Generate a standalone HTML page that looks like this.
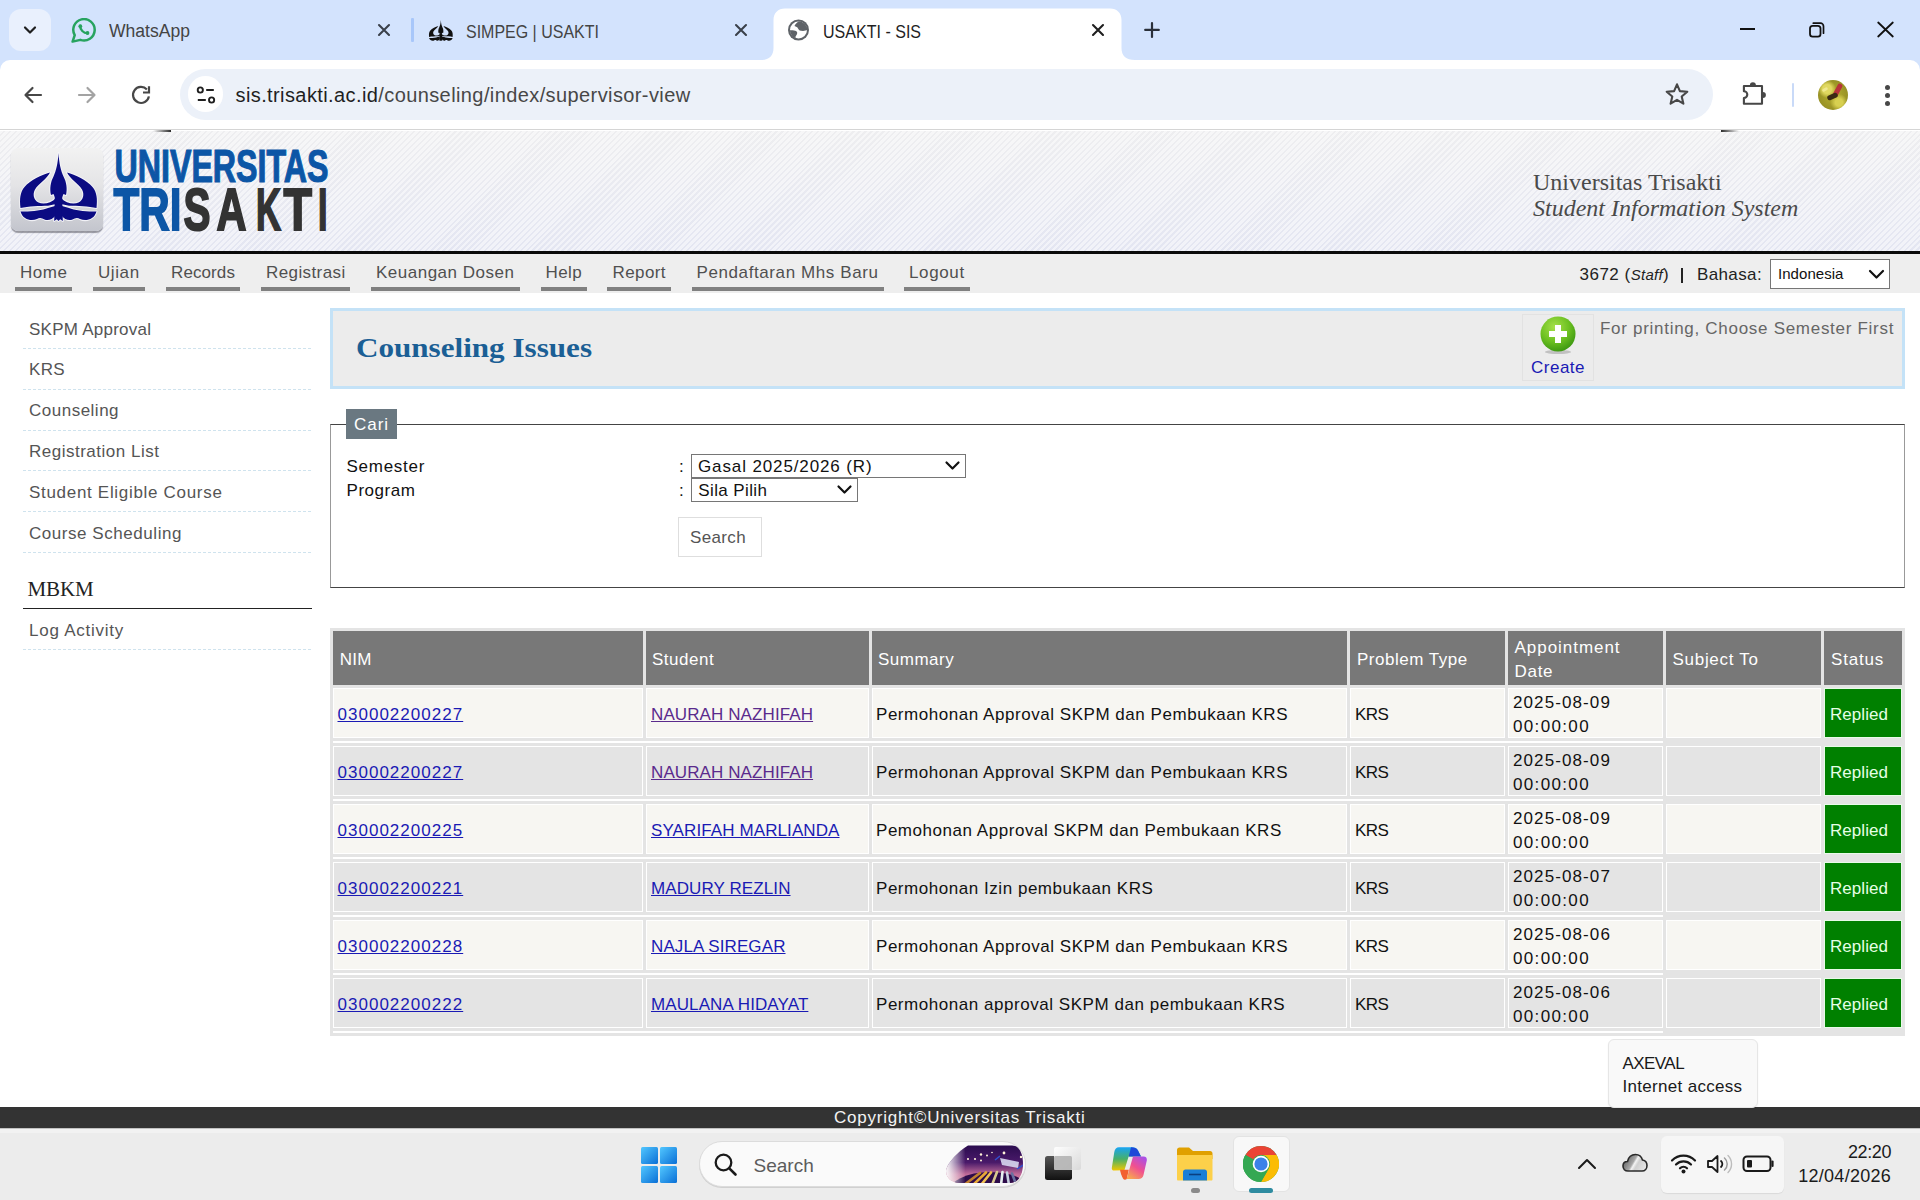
<!DOCTYPE html>
<html><head><meta charset="utf-8"><title>USAKTI - SIS</title>
<style>
html,body{margin:0;padding:0;width:1920px;height:1200px;overflow:hidden;background:#ffffff;font-family:"Liberation Sans",sans-serif;}
.r{position:absolute;}
.t{position:absolute;white-space:nowrap;}
</style></head><body>
<div class="r" style="left:0px;top:0px;width:1920px;height:72px;background:#d3e3fd"></div>
<div class="r" style="left:9px;top:9px;width:42px;height:42px;background:#e9f0fd;border-radius:12px"></div>
<svg class="r" style="left:21px;top:21px;" width="18" height="18" viewBox="0 0 18 18"><path d="M4 6.5 L9 11.5 L14 6.5" fill="none" stroke="#1f1f1f" stroke-width="2.2" stroke-linecap="round" stroke-linejoin="round"/></svg>
<svg class="r" style="left:71px;top:18px;" width="26" height="26" viewBox="0 0 26 26"><path d="M3.73 17.15 A10.7 10.7 0 1 1 9.34 21.85 L1.6 23.6 Z" fill="none" stroke="#27a35f" stroke-width="2.5" stroke-linejoin="round"/><path d="M9.2 8 C9 11.5 12.5 15.3 16.6 15.2" fill="none" stroke="#27a35f" stroke-width="2.3" stroke-linecap="round"/><circle cx="9.3" cy="8.2" r="1.9" fill="#27a35f"/><circle cx="16.5" cy="15" r="1.9" fill="#27a35f"/></svg>
<div class="t " style="left:108.5px;top:22.26px;font-size:18px;line-height:18px;color:#444;letter-spacing:0px;font-family:'Liberation Sans', sans-serif;font-weight:normal;font-style:normal;transform:scaleX(0.976);transform-origin:0 0;">WhatsApp</div>
<svg class="r" style="left:377px;top:23px;" width="14" height="14" viewBox="0 0 14 14"><path d="M2 2L12 12M12 2L2 12" stroke="#3a404a" stroke-width="2.1" stroke-linecap="round"/></svg>
<div class="r" style="left:411px;top:18px;width:2.5px;height:24px;background:#a8c7fa;border-radius:1px"></div>
<div class="t " style="left:465.5px;top:22.76px;font-size:18px;line-height:18px;color:#444;letter-spacing:0px;font-family:'Liberation Sans', sans-serif;font-weight:normal;font-style:normal;transform:scaleX(0.888);transform-origin:0 0;">SIMPEG | USAKTI</div>
<svg class="r" style="left:734px;top:23px;" width="14" height="14" viewBox="0 0 14 14"><path d="M2 2L12 12M12 2L2 12" stroke="#3a404a" stroke-width="2.1" stroke-linecap="round"/></svg>
<svg class="r" style="left:761px;top:8px;" width="374" height="53" viewBox="0 0 374 53"><path d="M0 52 C8 52 12.5 48 12.5 40 L12.5 12 C12.5 5 17 0.5 24 0.5 L349 0.5 C356 0.5 360.5 5 360.5 12 L360.5 40 C360.5 48 365 52 374 52 L374 53 L0 53Z" fill="#ffffff"/></svg>
<svg class="r" style="left:787px;top:19px;" width="23" height="23" viewBox="0 0 23 23"><defs><clipPath id="gc"><circle cx="11.5" cy="11" r="8.7"/></clipPath></defs><circle cx="11.5" cy="11" r="10.5" fill="#5f6368"/><circle cx="11.5" cy="11" r="8.5" fill="#fff"/><g clip-path="url(#gc)" fill="#5f6368"><path d="M13 1 C11 3 8 5 7.5 7 C9 8 10.5 8 11 9.5 C11.8 11.2 13 12 16 12 C18 12 20 11 22 10.5 L22 0 Z"/><path d="M0 11.5 C3 11 7.5 11 9 12 C10.7 13 10.5 15 9.2 16.5 C8 17.5 8.5 19.5 9.5 22 L0 22 Z"/></g></svg>
<div class="t " style="left:822.5px;top:22.76px;font-size:18px;line-height:18px;color:#1f1f1f;letter-spacing:0px;font-family:'Liberation Sans', sans-serif;font-weight:normal;font-style:normal;transform:scaleX(0.891);transform-origin:0 0;">USAKTI - SIS</div>
<svg class="r" style="left:1091px;top:23px;" width="14" height="14" viewBox="0 0 14 14"><path d="M2 2L12 12M12 2L2 12" stroke="#1f1f1f" stroke-width="2.1" stroke-linecap="round"/></svg>
<svg class="r" style="left:1143px;top:22px;" width="18" height="18" viewBox="0 0 18 18"><path d="M9 1.2V15M2.2 7.9H15.8" stroke="#2a303a" stroke-width="2.2" stroke-linecap="round"/></svg>
<div class="r" style="left:1740px;top:28px;width:15.3px;height:2.3px;background:#111"></div>
<svg class="r" style="left:1807px;top:20px;" width="20" height="20" viewBox="0 0 20 20"><rect x="3" y="5.8" width="10.5" height="10.8" rx="2.6" fill="none" stroke="#111" stroke-width="1.8"/><path d="M6.3 3.2 H13.5 A3 3 0 0 1 16.5 6.2 V13.2" fill="none" stroke="#111" stroke-width="1.7" stroke-linecap="round"/></svg>
<svg class="r" style="left:1875px;top:20px;" width="20" height="20" viewBox="0 0 20 20"><path d="M3.2 2.5 L17.8 16.5 M17.8 2.5 L3.2 16.5" stroke="#111" stroke-width="1.8" stroke-linecap="round"/></svg>
<div class="r" style="left:0px;top:60px;width:1920px;height:70px;background:#ffffff;border-radius:10px 10px 0 0"></div>
<div class="r" style="left:0px;top:129px;width:1920px;height:1px;background:#d5d5d5"></div>
<svg class="r" style="left:22px;top:84px;" width="22" height="22" viewBox="0 0 22 22"><path d="M19 11H4M10.5 4L3.5 11L10.5 18" fill="none" stroke="#474747" stroke-width="2.2" stroke-linecap="round" stroke-linejoin="round"/></svg>
<svg class="r" style="left:76px;top:84px;" width="22" height="22" viewBox="0 0 22 22"><path d="M3 11H18M11.5 4L18.5 11L11.5 18" fill="none" stroke="#a3a3a3" stroke-width="2.2" stroke-linecap="round" stroke-linejoin="round"/></svg>
<svg class="r" style="left:130px;top:84px;" width="22" height="22" viewBox="0 0 22 22"><path d="M18.9 12.4 A8 8 0 1 1 16.9 5.5" fill="none" stroke="#474747" stroke-width="2.2"/><path d="M13 8.5 H19 V2.2" fill="none" stroke="#474747" stroke-width="2.2" stroke-linejoin="miter"/></svg>
<div class="r" style="left:180px;top:69px;width:1533px;height:51px;background:#ecf1f9;border-radius:25.5px"></div>
<div class="r" style="left:188px;top:76px;width:35px;height:36px;background:#ffffff;border-radius:18px"></div>
<svg class="r" style="left:195px;top:84px;" width="22" height="22" viewBox="0 0 22 22"><circle cx="5.3" cy="6" r="2.6" fill="none" stroke="#1f1f1f" stroke-width="1.9"/><path d="M11.2 6H18.8" stroke="#1f1f1f" stroke-width="2"/><circle cx="16.6" cy="16" r="2.6" fill="none" stroke="#1f1f1f" stroke-width="1.9"/><path d="M2.8 16H10.8" stroke="#1f1f1f" stroke-width="2"/></svg>
<div class="t " style="left:235.5px;top:85.07px;font-size:20px;line-height:20px;color:#474747;letter-spacing:0.4px;font-family:'Liberation Sans', sans-serif;font-weight:normal;font-style:normal;"><span style="color:#1f1f1f">sis.trisakti.ac.id</span>/counseling/index/supervisor-view</div>
<svg class="r" style="left:1664px;top:82px;" width="26" height="25" viewBox="0 0 26 25"><path d="M13 2.3 L15.9 9.1 L23.3 9.7 L17.7 14.5 L19.4 21.7 L13 17.9 L6.6 21.7 L8.3 14.5 L2.7 9.7 L10.1 9.1Z" fill="none" stroke="#474747" stroke-width="2.1" stroke-linejoin="round"/></svg>
<svg class="r" style="left:1741px;top:81px;" width="27" height="26" viewBox="0 0 27 26"><path d="M2.9 5 H21 V22.8 H2.9 V17 A3.4 3.4 0 0 0 2.9 10.2 Z" fill="none" stroke="#474747" stroke-width="2.1" stroke-linejoin="round"/><path d="M8.9 4.3 A3 3 0 0 1 14.9 4.3 Z" fill="#474747"/><path d="M21.9 10.9 A3 3 0 0 1 21.9 16.9 Z" fill="#474747"/></svg>
<div class="r" style="left:1791.5px;top:82.5px;width:2.5px;height:24px;background:#c9daf8;border-radius:1px"></div>
<div class="r" style="left:1818px;top:80px;width:30px;height:30px;border-radius:15px;overflow:hidden;background:radial-gradient(circle at 30% 30%, #e0d860 0 15%, transparent 30%),radial-gradient(circle at 70% 75%, #d8d050 0 12%, transparent 28%),radial-gradient(circle at 50% 50%, #b8b030, #8a8420)"><div style="position:absolute;left:17px;top:3px;width:5px;height:15px;background:#b8323a;transform:rotate(28deg);border-radius:3px"></div><div style="position:absolute;left:9px;top:14px;width:11px;height:5px;background:#3a2a12;transform:rotate(-25deg);border-radius:3px"></div><div style="position:absolute;left:4px;top:8px;width:6px;height:3px;background:#f0e890;transform:rotate(-30deg);border-radius:2px"></div></div>
<div class="r" style="left:1884.5px;top:84.5px;width:5px;height:5px;background:#474747;border-radius:50%"></div>
<div class="r" style="left:1884.5px;top:92.5px;width:5px;height:5px;background:#474747;border-radius:50%"></div>
<div class="r" style="left:1884.5px;top:100.5px;width:5px;height:5px;background:#474747;border-radius:50%"></div>
<div class="r" style="left:0px;top:131px;width:1920px;height:120px;background:repeating-linear-gradient(135deg, rgba(255,255,255,0.5) 0 2.5px, rgba(255,255,255,0) 2.5px 4.2px), linear-gradient(#eeeef0, #e4e6f2)"></div>
<div class="r" style="left:0px;top:251px;width:1920px;height:3px;background:#0a0a0a"></div>
<div class="r" style="left:153px;top:130px;width:18px;height:1.5px;background:linear-gradient(90deg,rgba(40,40,40,0),#2a2a2a)"></div>
<div class="r" style="left:1721px;top:130px;width:18px;height:1.5px;background:linear-gradient(90deg,#2a2a2a,rgba(40,40,40,0))"></div>
<div class="r" style="left:0px;top:254px;width:1920px;height:39px;background:#eeeeee"></div>
<div class="r" style="left:11px;top:148px;width:92px;height:83px;border-radius:7px;background:linear-gradient(#f2f2f2 0%, #e4e4e6 45%, #c3c5cd 100%);box-shadow:0 2px 1px rgba(80,80,90,0.55)"></div>
<svg class="r" style="left:11px;top:148px;" width="92" height="83" viewBox="11 148 92 83"><g fill="#f6f6fa" stroke="#f6f6fa" stroke-width="2" stroke-linejoin="round" opacity="0.9"><path d="M58.5 153 C59 163 61 171 63.5 176.5 C66.5 182 67.5 189 66 195 L63.5 194 L62 197.5 L55 197.5 L53.5 194 L51 195 C49.5 189 50.5 182 53.5 176.5 C56 171 58 163 58.5 153Z"/><path d="M54.8 196 L62.2 196 L62.8 221 L60.2 219.3 L58.5 221 L56.8 219.3 L54.2 221Z"/><path d="M50 172.5 C42 175 30 180 24.5 187 C20 192.5 19.5 199 20.5 208 C28 206.3 40 206 48 205.8 L56 204 L56 198 C51 203.5 43 204.5 38.5 202.5 C33.5 200 32.5 194 35 189.5 C38.5 183.5 47 179 50 172.5Z"/><path d="M20.5 211.5 C30 212 42 210.5 48 208 L55 206 L55.5 215.5 C52.5 219.5 48 221 44.5 219.5 C42 218 39.5 217.5 37 219 C31.5 221.5 23 220 20.5 211.5Z"/><g transform="translate(117,0) scale(-1,1)"><path d="M50 172.5 C42 175 30 180 24.5 187 C20 192.5 19.5 199 20.5 208 C28 206.3 40 206 48 205.8 L56 204 L56 198 C51 203.5 43 204.5 38.5 202.5 C33.5 200 32.5 194 35 189.5 C38.5 183.5 47 179 50 172.5Z"/><path d="M20.5 211.5 C30 212 42 210.5 48 208 L55 206 L55.5 215.5 C52.5 219.5 48 221 44.5 219.5 C42 218 39.5 217.5 37 219 C31.5 221.5 23 220 20.5 211.5Z"/></g></g><g fill="#0b0b82"><path d="M58.5 153 C59 163 61 171 63.5 176.5 C66.5 182 67.5 189 66 195 L63.5 194 L62 197.5 L55 197.5 L53.5 194 L51 195 C49.5 189 50.5 182 53.5 176.5 C56 171 58 163 58.5 153Z"/><path d="M54.8 196 L62.2 196 L62.8 221 L60.2 219.3 L58.5 221 L56.8 219.3 L54.2 221Z"/><path d="M50 172.5 C42 175 30 180 24.5 187 C20 192.5 19.5 199 20.5 208 C28 206.3 40 206 48 205.8 L56 204 L56 198 C51 203.5 43 204.5 38.5 202.5 C33.5 200 32.5 194 35 189.5 C38.5 183.5 47 179 50 172.5Z"/><path d="M20.5 211.5 C30 212 42 210.5 48 208 L55 206 L55.5 215.5 C52.5 219.5 48 221 44.5 219.5 C42 218 39.5 217.5 37 219 C31.5 221.5 23 220 20.5 211.5Z"/><g transform="translate(117,0) scale(-1,1)"><path d="M50 172.5 C42 175 30 180 24.5 187 C20 192.5 19.5 199 20.5 208 C28 206.3 40 206 48 205.8 L56 204 L56 198 C51 203.5 43 204.5 38.5 202.5 C33.5 200 32.5 194 35 189.5 C38.5 183.5 47 179 50 172.5Z"/><path d="M20.5 211.5 C30 212 42 210.5 48 208 L55 206 L55.5 215.5 C52.5 219.5 48 221 44.5 219.5 C42 218 39.5 217.5 37 219 C31.5 221.5 23 220 20.5 211.5Z"/></g></g></svg>
<svg class="r" style="left:428px;top:19px;" width="26" height="23" viewBox="17 150 84 74"><g fill="#111"><path d="M58.5 153 C59 163 61 171 63.5 176.5 C66.5 182 67.5 189 66 195 L63.5 194 L62 197.5 L55 197.5 L53.5 194 L51 195 C49.5 189 50.5 182 53.5 176.5 C56 171 58 163 58.5 153Z"/><path d="M54.8 196 L62.2 196 L62.8 221 L60.2 219.3 L58.5 221 L56.8 219.3 L54.2 221Z"/><path d="M50 172.5 C42 175 30 180 24.5 187 C20 192.5 19.5 199 20.5 208 C28 206.3 40 206 48 205.8 L56 204 L56 198 C51 203.5 43 204.5 38.5 202.5 C33.5 200 32.5 194 35 189.5 C38.5 183.5 47 179 50 172.5Z"/><path d="M20.5 211.5 C30 212 42 210.5 48 208 L55 206 L55.5 215.5 C52.5 219.5 48 221 44.5 219.5 C42 218 39.5 217.5 37 219 C31.5 221.5 23 220 20.5 211.5Z"/><g transform="translate(117,0) scale(-1,1)"><path d="M50 172.5 C42 175 30 180 24.5 187 C20 192.5 19.5 199 20.5 208 C28 206.3 40 206 48 205.8 L56 204 L56 198 C51 203.5 43 204.5 38.5 202.5 C33.5 200 32.5 194 35 189.5 C38.5 183.5 47 179 50 172.5Z"/><path d="M20.5 211.5 C30 212 42 210.5 48 208 L55 206 L55.5 215.5 C52.5 219.5 48 221 44.5 219.5 C42 218 39.5 217.5 37 219 C31.5 221.5 23 220 20.5 211.5Z"/></g></g></svg>
<svg class="r" style="left:100px;top:140px;" width="240" height="100" viewBox="0 0 240 100"><text x="14.5" y="41.9" font-family="Liberation Sans" font-weight="bold" font-size="47" fill="#0c56a6" stroke="#0c56a6" stroke-width="1.2" textLength="214" lengthAdjust="spacingAndGlyphs">UNIVERSITAS</text><text x="13.5" y="90" font-family="Liberation Sans" font-weight="bold" font-size="60" fill="#0c56a6" stroke="#0c56a6" stroke-width="1.8" textLength="68" lengthAdjust="spacingAndGlyphs">TRI</text><text x="83.5" y="90" font-family="Liberation Sans" font-weight="bold" font-size="60" fill="#333333" stroke="#333333" stroke-width="2" textLength="27" lengthAdjust="spacingAndGlyphs">S</text><text x="116.5" y="90" font-family="Liberation Sans" font-weight="bold" font-size="60" fill="#333333" stroke="#333333" stroke-width="2" textLength="30" lengthAdjust="spacingAndGlyphs">A</text><text x="156" y="90" font-family="Liberation Sans" font-weight="bold" font-size="60" fill="#333333" stroke="#333333" stroke-width="2" textLength="25" lengthAdjust="spacingAndGlyphs">K</text><text x="183.5" y="90" font-family="Liberation Sans" font-weight="bold" font-size="60" fill="#333333" stroke="#333333" stroke-width="2" textLength="28.5" lengthAdjust="spacingAndGlyphs">T</text><text x="218" y="90" font-family="Liberation Sans" font-weight="bold" font-size="60" fill="#333333" stroke="#333333" stroke-width="2" textLength="9.5" lengthAdjust="spacingAndGlyphs">I</text></svg>
<div class="t " style="left:1533px;top:169.90px;font-size:24px;line-height:24px;color:#4a4a4a;letter-spacing:0px;font-family:'Liberation Serif', serif;font-weight:normal;font-style:normal;">Universitas Trisakti</div>
<div class="t " style="left:1533px;top:195.90px;font-size:24px;line-height:24px;color:#4a4a4a;letter-spacing:0px;font-family:'Liberation Serif', serif;font-weight:normal;font-style:italic;">Student Information System</div>
<div class="t " style="left:20px;top:263.61px;font-size:17px;line-height:17px;color:#505050;letter-spacing:0.54px;font-family:'Liberation Sans', sans-serif;font-weight:normal;font-style:normal;">Home</div>
<div class="r" style="left:15px;top:287px;width:57px;height:4px;background:#808080"></div>
<div class="t " style="left:98px;top:263.61px;font-size:17px;line-height:17px;color:#505050;letter-spacing:0.59px;font-family:'Liberation Sans', sans-serif;font-weight:normal;font-style:normal;">Ujian</div>
<div class="r" style="left:93px;top:287px;width:52px;height:4px;background:#808080"></div>
<div class="t " style="left:171px;top:263.61px;font-size:17px;line-height:17px;color:#505050;letter-spacing:0.1px;font-family:'Liberation Sans', sans-serif;font-weight:normal;font-style:normal;">Records</div>
<div class="r" style="left:166px;top:287px;width:74px;height:4px;background:#808080"></div>
<div class="t " style="left:266px;top:263.61px;font-size:17px;line-height:17px;color:#505050;letter-spacing:0.4px;font-family:'Liberation Sans', sans-serif;font-weight:normal;font-style:normal;">Registrasi</div>
<div class="r" style="left:261px;top:287px;width:89px;height:4px;background:#808080"></div>
<div class="t " style="left:376px;top:263.61px;font-size:17px;line-height:17px;color:#505050;letter-spacing:0.5px;font-family:'Liberation Sans', sans-serif;font-weight:normal;font-style:normal;">Keuangan Dosen</div>
<div class="r" style="left:371px;top:287px;width:149px;height:4px;background:#808080"></div>
<div class="t " style="left:545.5px;top:263.61px;font-size:17px;line-height:17px;color:#505050;letter-spacing:0.38px;font-family:'Liberation Sans', sans-serif;font-weight:normal;font-style:normal;">Help</div>
<div class="r" style="left:541px;top:287px;width:46px;height:4px;background:#808080"></div>
<div class="t " style="left:612.5px;top:263.61px;font-size:17px;line-height:17px;color:#505050;letter-spacing:0.4px;font-family:'Liberation Sans', sans-serif;font-weight:normal;font-style:normal;">Report</div>
<div class="r" style="left:607px;top:287px;width:64px;height:4px;background:#808080"></div>
<div class="t " style="left:696.5px;top:263.61px;font-size:17px;line-height:17px;color:#505050;letter-spacing:0.6px;font-family:'Liberation Sans', sans-serif;font-weight:normal;font-style:normal;">Pendaftaran Mhs Baru</div>
<div class="r" style="left:692px;top:287px;width:192px;height:4px;background:#808080"></div>
<div class="t " style="left:909px;top:263.61px;font-size:17px;line-height:17px;color:#505050;letter-spacing:0.63px;font-family:'Liberation Sans', sans-serif;font-weight:normal;font-style:normal;">Logout</div>
<div class="r" style="left:904px;top:287px;width:66px;height:4px;background:#808080"></div>
<div class="t " style="left:1579.5px;top:265.61px;font-size:17px;line-height:17px;color:#222;letter-spacing:0.5px;font-family:'Liberation Sans', sans-serif;font-weight:normal;font-style:normal;">3672 (<span style="font-style:italic;font-size:15px;letter-spacing:0.3px">Staff</span>)</div>
<div class="r" style="left:1680.5px;top:268px;width:2px;height:15px;background:#222"></div>
<div class="t " style="left:1697px;top:265.61px;font-size:17px;line-height:17px;color:#222;letter-spacing:0.37px;font-family:'Liberation Sans', sans-serif;font-weight:normal;font-style:normal;">Bahasa:</div>
<div class="r" style="left:1770px;top:259px;width:120px;height:30px;background:#fff;border:1px solid #767676;box-sizing:border-box"></div>
<div class="t " style="left:1778px;top:266.30px;font-size:15px;line-height:15px;color:#111;letter-spacing:0.05px;font-family:'Liberation Sans', sans-serif;font-weight:normal;font-style:normal;">Indonesia</div>
<svg class="r" style="left:1868px;top:269px;" width="17" height="11" viewBox="0 0 17 11"><path d="M2 2 L8.5 8.5 L15 2" fill="none" stroke="#111" stroke-width="2.2" stroke-linecap="round" stroke-linejoin="round"/></svg>
<div class="t " style="left:29px;top:320.61px;font-size:17px;line-height:17px;color:#555;letter-spacing:0.25px;font-family:'Liberation Sans', sans-serif;font-weight:normal;font-style:normal;">SKPM Approval</div>
<div class="r" style="left:23px;top:348px;width:289px;height:1px;background:repeating-linear-gradient(90deg,#cfe3ee 0 3px,transparent 3px 5px)"></div>
<div class="t " style="left:29px;top:361.41px;font-size:17px;line-height:17px;color:#555;letter-spacing:0.3px;font-family:'Liberation Sans', sans-serif;font-weight:normal;font-style:normal;">KRS</div>
<div class="r" style="left:23px;top:389px;width:289px;height:1px;background:repeating-linear-gradient(90deg,#cfe3ee 0 3px,transparent 3px 5px)"></div>
<div class="t " style="left:29px;top:402.21px;font-size:17px;line-height:17px;color:#555;letter-spacing:0.5px;font-family:'Liberation Sans', sans-serif;font-weight:normal;font-style:normal;">Counseling</div>
<div class="r" style="left:23px;top:430px;width:289px;height:1px;background:repeating-linear-gradient(90deg,#cfe3ee 0 3px,transparent 3px 5px)"></div>
<div class="t " style="left:29px;top:443.01px;font-size:17px;line-height:17px;color:#555;letter-spacing:0.5px;font-family:'Liberation Sans', sans-serif;font-weight:normal;font-style:normal;">Registration List</div>
<div class="r" style="left:23px;top:470px;width:289px;height:1px;background:repeating-linear-gradient(90deg,#cfe3ee 0 3px,transparent 3px 5px)"></div>
<div class="t " style="left:29px;top:483.81px;font-size:17px;line-height:17px;color:#555;letter-spacing:0.69px;font-family:'Liberation Sans', sans-serif;font-weight:normal;font-style:normal;">Student Eligible Course</div>
<div class="r" style="left:23px;top:511px;width:289px;height:1px;background:repeating-linear-gradient(90deg,#cfe3ee 0 3px,transparent 3px 5px)"></div>
<div class="t " style="left:29px;top:524.61px;font-size:17px;line-height:17px;color:#555;letter-spacing:0.55px;font-family:'Liberation Sans', sans-serif;font-weight:normal;font-style:normal;">Course Scheduling</div>
<div class="r" style="left:23px;top:552px;width:289px;height:1px;background:repeating-linear-gradient(90deg,#cfe3ee 0 3px,transparent 3px 5px)"></div>
<div class="t " style="left:27.5px;top:579.41px;font-size:21px;line-height:21px;color:#222;letter-spacing:-0.1px;font-family:'Liberation Serif', serif;font-weight:normal;font-style:normal;">MBKM</div>
<div class="r" style="left:23px;top:608px;width:289px;height:1px;background:#222"></div>
<div class="t " style="left:29px;top:621.61px;font-size:17px;line-height:17px;color:#555;letter-spacing:0.76px;font-family:'Liberation Sans', sans-serif;font-weight:normal;font-style:normal;">Log Activity</div>
<div class="r" style="left:23px;top:649px;width:289px;height:1px;background:repeating-linear-gradient(90deg,#cfe3ee 0 3px,transparent 3px 5px)"></div>
<div class="r" style="left:330px;top:308px;width:1575px;height:81px;background:#ececec;border:3px solid #c4e2f7;box-sizing:border-box"></div>
<div class="t " style="left:355.5px;top:333.55px;font-size:28px;line-height:28px;color:#1b5f95;letter-spacing:0px;font-family:'Liberation Serif', serif;font-weight:bold;font-style:normal;transform:scaleX(1.111);transform-origin:0 0;">Counseling Issues</div>
<div class="r" style="left:1522px;top:314px;width:72px;height:67px;border:1px solid #e2e2e2;box-sizing:border-box"></div>
<svg class="r" style="left:1538px;top:315px;" width="40" height="42" viewBox="0 0 40 42"><defs><radialGradient id="g1" cx="40%" cy="30%" r="70%"><stop offset="0" stop-color="#a6e04a"/><stop offset="0.6" stop-color="#6cc021"/><stop offset="1" stop-color="#3f9a12"/></radialGradient></defs><ellipse cx="20" cy="37" rx="13" ry="2" fill="rgba(0,0,0,0.18)"/><circle cx="20" cy="19" r="17.5" fill="url(#g1)"/><path d="M20 10V28M11 19H29" stroke="#fff" stroke-width="6"/></svg>
<div class="t " style="left:1531px;top:358.61px;font-size:17px;line-height:17px;color:#1a1ab4;letter-spacing:0.5px;font-family:'Liberation Sans', sans-serif;font-weight:normal;font-style:normal;">Create</div>
<div class="t " style="left:1600px;top:319.61px;font-size:17px;line-height:17px;color:#666;letter-spacing:0.71px;font-family:'Liberation Sans', sans-serif;font-weight:normal;font-style:normal;">For printing, Choose Semester First</div>
<div class="r" style="left:330px;top:424px;width:1575px;height:164px;border:1px solid #444;border-left-color:#999;border-right-color:#999;box-sizing:border-box"></div>
<div class="r" style="left:346px;top:409px;width:51px;height:30px;background:#6a7881"></div>
<div class="t " style="left:354px;top:415.61px;font-size:17px;line-height:17px;color:#fff;letter-spacing:0.96px;font-family:'Liberation Sans', sans-serif;font-weight:normal;font-style:normal;">Cari</div>
<div class="t " style="left:346.5px;top:458.11px;font-size:17px;line-height:17px;color:#111;letter-spacing:0.74px;font-family:'Liberation Sans', sans-serif;font-weight:normal;font-style:normal;">Semester</div>
<div class="t " style="left:346.5px;top:482.11px;font-size:17px;line-height:17px;color:#111;letter-spacing:0.54px;font-family:'Liberation Sans', sans-serif;font-weight:normal;font-style:normal;">Program</div>
<div class="t " style="left:679px;top:458.11px;font-size:17px;line-height:17px;color:#111;letter-spacing:0px;font-family:'Liberation Sans', sans-serif;font-weight:normal;font-style:normal;">:</div>
<div class="t " style="left:679px;top:482.11px;font-size:17px;line-height:17px;color:#111;letter-spacing:0px;font-family:'Liberation Sans', sans-serif;font-weight:normal;font-style:normal;">:</div>
<div class="r" style="left:691px;top:454px;width:275px;height:24px;background:#fff;border:1px solid #767676;box-sizing:border-box"></div>
<div class="t " style="left:698px;top:458.11px;font-size:17px;line-height:17px;color:#111;letter-spacing:0.88px;font-family:'Liberation Sans', sans-serif;font-weight:normal;font-style:normal;">Gasal 2025/2026 (R)</div>
<svg class="r" style="left:944px;top:460px;" width="17" height="12" viewBox="0 0 17 12"><path d="M2.5 2.5 L8.5 8.5 L14.5 2.5" fill="none" stroke="#111" stroke-width="2.2" stroke-linecap="round" stroke-linejoin="round"/></svg>
<div class="r" style="left:691px;top:478px;width:167px;height:24px;background:#fff;border:1px solid #767676;box-sizing:border-box"></div>
<div class="t " style="left:698.3px;top:482.11px;font-size:17px;line-height:17px;color:#111;letter-spacing:0.38px;font-family:'Liberation Sans', sans-serif;font-weight:normal;font-style:normal;">Sila Pilih</div>
<svg class="r" style="left:836px;top:484px;" width="17" height="12" viewBox="0 0 17 12"><path d="M2.5 2.5 L8.5 8.5 L14.5 2.5" fill="none" stroke="#111" stroke-width="2.2" stroke-linecap="round" stroke-linejoin="round"/></svg>
<div class="r" style="left:678px;top:517px;width:84px;height:40px;background:#fff;border:1px solid #dedede;box-sizing:border-box"></div>
<div class="t " style="left:690px;top:528.61px;font-size:17px;line-height:17px;color:#555;letter-spacing:0.36px;font-family:'Liberation Sans', sans-serif;font-weight:normal;font-style:normal;">Search</div>
<div class="r" style="left:330px;top:628px;width:1575px;height:408px;background:#e4e4e4"></div>
<div class="r" style="left:333px;top:631px;width:310px;height:54px;background:#787878"></div>
<div class="r" style="left:646px;top:631px;width:223px;height:54px;background:#787878"></div>
<div class="r" style="left:872px;top:631px;width:475px;height:54px;background:#787878"></div>
<div class="r" style="left:1350px;top:631px;width:155px;height:54px;background:#787878"></div>
<div class="r" style="left:1508px;top:631px;width:155px;height:54px;background:#787878"></div>
<div class="r" style="left:1666px;top:631px;width:155px;height:54px;background:#787878"></div>
<div class="r" style="left:1824px;top:631px;width:78px;height:54px;background:#787878"></div>
<div class="t " style="left:339.8px;top:650.61px;font-size:17px;line-height:17px;color:#fff;letter-spacing:0.28px;font-family:'Liberation Sans', sans-serif;font-weight:normal;font-style:normal;">NIM</div>
<div class="t " style="left:652px;top:650.61px;font-size:17px;line-height:17px;color:#fff;letter-spacing:0.5px;font-family:'Liberation Sans', sans-serif;font-weight:normal;font-style:normal;">Student</div>
<div class="t " style="left:878px;top:650.61px;font-size:17px;line-height:17px;color:#fff;letter-spacing:0.5px;font-family:'Liberation Sans', sans-serif;font-weight:normal;font-style:normal;">Summary</div>
<div class="t " style="left:1357px;top:650.61px;font-size:17px;line-height:17px;color:#fff;letter-spacing:0.51px;font-family:'Liberation Sans', sans-serif;font-weight:normal;font-style:normal;">Problem Type</div>
<div class="t " style="left:1514.5px;top:638.61px;font-size:17px;line-height:17px;color:#fff;letter-spacing:0.96px;font-family:'Liberation Sans', sans-serif;font-weight:normal;font-style:normal;">Appointment</div>
<div class="t " style="left:1514.5px;top:662.61px;font-size:17px;line-height:17px;color:#fff;letter-spacing:0.7px;font-family:'Liberation Sans', sans-serif;font-weight:normal;font-style:normal;">Date</div>
<div class="t " style="left:1672.5px;top:650.61px;font-size:17px;line-height:17px;color:#fff;letter-spacing:0.71px;font-family:'Liberation Sans', sans-serif;font-weight:normal;font-style:normal;">Subject To</div>
<div class="t " style="left:1831px;top:650.61px;font-size:17px;line-height:17px;color:#fff;letter-spacing:0.8px;font-family:'Liberation Sans', sans-serif;font-weight:normal;font-style:normal;">Status</div>
<div class="r" style="left:333px;top:688px;width:310px;height:50px;background:#f7f6f2;border:1px solid #fff;box-sizing:border-box"></div>
<div class="r" style="left:646px;top:688px;width:223px;height:50px;background:#f7f6f2;border:1px solid #fff;box-sizing:border-box"></div>
<div class="r" style="left:872px;top:688px;width:475px;height:50px;background:#f7f6f2;border:1px solid #fff;box-sizing:border-box"></div>
<div class="r" style="left:1350px;top:688px;width:155px;height:50px;background:#f7f6f2;border:1px solid #fff;box-sizing:border-box"></div>
<div class="r" style="left:1508px;top:688px;width:155px;height:50px;background:#f7f6f2;border:1px solid #fff;box-sizing:border-box"></div>
<div class="r" style="left:1666px;top:688px;width:155px;height:50px;background:#f7f6f2;border:1px solid #fff;box-sizing:border-box"></div>
<div class="r" style="left:1824px;top:688px;width:78px;height:50px;background:#008000;border:1px solid #e8fbe8;box-sizing:border-box"></div>
<div class="r" style="left:333px;top:741px;width:1330px;height:2px;background:#fff"></div>
<div class="t " style="left:337.5px;top:705.61px;font-size:17px;line-height:17px;color:#1a1ab4;letter-spacing:1.02px;font-family:'Liberation Sans', sans-serif;font-weight:normal;font-style:normal;"><span style="text-decoration:underline">030002200227</span></div>
<div class="t " style="left:651px;top:705.61px;font-size:17px;line-height:17px;color:#5a2a8c;letter-spacing:0.1px;font-family:'Liberation Sans', sans-serif;font-weight:normal;font-style:normal;"><span style="text-decoration:underline">NAURAH NAZHIFAH</span></div>
<div class="t " style="left:876px;top:705.61px;font-size:17px;line-height:17px;color:#111;letter-spacing:0.54px;font-family:'Liberation Sans', sans-serif;font-weight:normal;font-style:normal;">Permohonan Approval SKPM dan Pembukaan KRS</div>
<div class="t " style="left:1355px;top:705.61px;font-size:17px;line-height:17px;color:#111;letter-spacing:-0.6px;font-family:'Liberation Sans', sans-serif;font-weight:normal;font-style:normal;">KRS</div>
<div class="t " style="left:1513px;top:693.61px;font-size:17px;line-height:17px;color:#111;letter-spacing:1.1px;font-family:'Liberation Sans', sans-serif;font-weight:normal;font-style:normal;">2025-08-09</div>
<div class="t " style="left:1513px;top:717.61px;font-size:17px;line-height:17px;color:#111;letter-spacing:1.35px;font-family:'Liberation Sans', sans-serif;font-weight:normal;font-style:normal;">00:00:00</div>
<div class="t " style="left:1830px;top:705.61px;font-size:17px;line-height:17px;color:#e6ffe6;letter-spacing:0.05px;font-family:'Liberation Sans', sans-serif;font-weight:normal;font-style:normal;">Replied</div>
<div class="r" style="left:333px;top:746px;width:310px;height:50px;background:#e4e4e4;border:1px solid #fff;box-sizing:border-box"></div>
<div class="r" style="left:646px;top:746px;width:223px;height:50px;background:#e4e4e4;border:1px solid #fff;box-sizing:border-box"></div>
<div class="r" style="left:872px;top:746px;width:475px;height:50px;background:#e4e4e4;border:1px solid #fff;box-sizing:border-box"></div>
<div class="r" style="left:1350px;top:746px;width:155px;height:50px;background:#e4e4e4;border:1px solid #fff;box-sizing:border-box"></div>
<div class="r" style="left:1508px;top:746px;width:155px;height:50px;background:#e4e4e4;border:1px solid #fff;box-sizing:border-box"></div>
<div class="r" style="left:1666px;top:746px;width:155px;height:50px;background:#e4e4e4;border:1px solid #fff;box-sizing:border-box"></div>
<div class="r" style="left:1824px;top:746px;width:78px;height:50px;background:#008000;border:1px solid #e8fbe8;box-sizing:border-box"></div>
<div class="r" style="left:333px;top:799px;width:1330px;height:2px;background:#fff"></div>
<div class="t " style="left:337.5px;top:763.61px;font-size:17px;line-height:17px;color:#1a1ab4;letter-spacing:1.02px;font-family:'Liberation Sans', sans-serif;font-weight:normal;font-style:normal;"><span style="text-decoration:underline">030002200227</span></div>
<div class="t " style="left:651px;top:763.61px;font-size:17px;line-height:17px;color:#5a2a8c;letter-spacing:0.1px;font-family:'Liberation Sans', sans-serif;font-weight:normal;font-style:normal;"><span style="text-decoration:underline">NAURAH NAZHIFAH</span></div>
<div class="t " style="left:876px;top:763.61px;font-size:17px;line-height:17px;color:#111;letter-spacing:0.54px;font-family:'Liberation Sans', sans-serif;font-weight:normal;font-style:normal;">Permohonan Approval SKPM dan Pembukaan KRS</div>
<div class="t " style="left:1355px;top:763.61px;font-size:17px;line-height:17px;color:#111;letter-spacing:-0.6px;font-family:'Liberation Sans', sans-serif;font-weight:normal;font-style:normal;">KRS</div>
<div class="t " style="left:1513px;top:751.61px;font-size:17px;line-height:17px;color:#111;letter-spacing:1.1px;font-family:'Liberation Sans', sans-serif;font-weight:normal;font-style:normal;">2025-08-09</div>
<div class="t " style="left:1513px;top:775.61px;font-size:17px;line-height:17px;color:#111;letter-spacing:1.35px;font-family:'Liberation Sans', sans-serif;font-weight:normal;font-style:normal;">00:00:00</div>
<div class="t " style="left:1830px;top:763.61px;font-size:17px;line-height:17px;color:#e6ffe6;letter-spacing:0.05px;font-family:'Liberation Sans', sans-serif;font-weight:normal;font-style:normal;">Replied</div>
<div class="r" style="left:333px;top:804px;width:310px;height:50px;background:#f7f6f2;border:1px solid #fff;box-sizing:border-box"></div>
<div class="r" style="left:646px;top:804px;width:223px;height:50px;background:#f7f6f2;border:1px solid #fff;box-sizing:border-box"></div>
<div class="r" style="left:872px;top:804px;width:475px;height:50px;background:#f7f6f2;border:1px solid #fff;box-sizing:border-box"></div>
<div class="r" style="left:1350px;top:804px;width:155px;height:50px;background:#f7f6f2;border:1px solid #fff;box-sizing:border-box"></div>
<div class="r" style="left:1508px;top:804px;width:155px;height:50px;background:#f7f6f2;border:1px solid #fff;box-sizing:border-box"></div>
<div class="r" style="left:1666px;top:804px;width:155px;height:50px;background:#f7f6f2;border:1px solid #fff;box-sizing:border-box"></div>
<div class="r" style="left:1824px;top:804px;width:78px;height:50px;background:#008000;border:1px solid #e8fbe8;box-sizing:border-box"></div>
<div class="r" style="left:333px;top:857px;width:1330px;height:2px;background:#fff"></div>
<div class="t " style="left:337.5px;top:821.61px;font-size:17px;line-height:17px;color:#1a1ab4;letter-spacing:1.02px;font-family:'Liberation Sans', sans-serif;font-weight:normal;font-style:normal;"><span style="text-decoration:underline">030002200225</span></div>
<div class="t " style="left:651px;top:821.61px;font-size:17px;line-height:17px;color:#1a1ab4;letter-spacing:0.1px;font-family:'Liberation Sans', sans-serif;font-weight:normal;font-style:normal;"><span style="text-decoration:underline">SYARIFAH MARLIANDA</span></div>
<div class="t " style="left:876px;top:821.61px;font-size:17px;line-height:17px;color:#111;letter-spacing:0.54px;font-family:'Liberation Sans', sans-serif;font-weight:normal;font-style:normal;">Pemohonan Approval SKPM dan Pembukaan KRS</div>
<div class="t " style="left:1355px;top:821.61px;font-size:17px;line-height:17px;color:#111;letter-spacing:-0.6px;font-family:'Liberation Sans', sans-serif;font-weight:normal;font-style:normal;">KRS</div>
<div class="t " style="left:1513px;top:809.61px;font-size:17px;line-height:17px;color:#111;letter-spacing:1.1px;font-family:'Liberation Sans', sans-serif;font-weight:normal;font-style:normal;">2025-08-09</div>
<div class="t " style="left:1513px;top:833.61px;font-size:17px;line-height:17px;color:#111;letter-spacing:1.35px;font-family:'Liberation Sans', sans-serif;font-weight:normal;font-style:normal;">00:00:00</div>
<div class="t " style="left:1830px;top:821.61px;font-size:17px;line-height:17px;color:#e6ffe6;letter-spacing:0.05px;font-family:'Liberation Sans', sans-serif;font-weight:normal;font-style:normal;">Replied</div>
<div class="r" style="left:333px;top:862px;width:310px;height:50px;background:#e4e4e4;border:1px solid #fff;box-sizing:border-box"></div>
<div class="r" style="left:646px;top:862px;width:223px;height:50px;background:#e4e4e4;border:1px solid #fff;box-sizing:border-box"></div>
<div class="r" style="left:872px;top:862px;width:475px;height:50px;background:#e4e4e4;border:1px solid #fff;box-sizing:border-box"></div>
<div class="r" style="left:1350px;top:862px;width:155px;height:50px;background:#e4e4e4;border:1px solid #fff;box-sizing:border-box"></div>
<div class="r" style="left:1508px;top:862px;width:155px;height:50px;background:#e4e4e4;border:1px solid #fff;box-sizing:border-box"></div>
<div class="r" style="left:1666px;top:862px;width:155px;height:50px;background:#e4e4e4;border:1px solid #fff;box-sizing:border-box"></div>
<div class="r" style="left:1824px;top:862px;width:78px;height:50px;background:#008000;border:1px solid #e8fbe8;box-sizing:border-box"></div>
<div class="r" style="left:333px;top:915px;width:1330px;height:2px;background:#fff"></div>
<div class="t " style="left:337.5px;top:879.61px;font-size:17px;line-height:17px;color:#1a1ab4;letter-spacing:1.02px;font-family:'Liberation Sans', sans-serif;font-weight:normal;font-style:normal;"><span style="text-decoration:underline">030002200221</span></div>
<div class="t " style="left:651px;top:879.61px;font-size:17px;line-height:17px;color:#1a1ab4;letter-spacing:0.1px;font-family:'Liberation Sans', sans-serif;font-weight:normal;font-style:normal;"><span style="text-decoration:underline">MADURY REZLIN</span></div>
<div class="t " style="left:876px;top:879.61px;font-size:17px;line-height:17px;color:#111;letter-spacing:0.54px;font-family:'Liberation Sans', sans-serif;font-weight:normal;font-style:normal;">Permohonan Izin pembukaan KRS</div>
<div class="t " style="left:1355px;top:879.61px;font-size:17px;line-height:17px;color:#111;letter-spacing:-0.6px;font-family:'Liberation Sans', sans-serif;font-weight:normal;font-style:normal;">KRS</div>
<div class="t " style="left:1513px;top:867.61px;font-size:17px;line-height:17px;color:#111;letter-spacing:1.1px;font-family:'Liberation Sans', sans-serif;font-weight:normal;font-style:normal;">2025-08-07</div>
<div class="t " style="left:1513px;top:891.61px;font-size:17px;line-height:17px;color:#111;letter-spacing:1.35px;font-family:'Liberation Sans', sans-serif;font-weight:normal;font-style:normal;">00:00:00</div>
<div class="t " style="left:1830px;top:879.61px;font-size:17px;line-height:17px;color:#e6ffe6;letter-spacing:0.05px;font-family:'Liberation Sans', sans-serif;font-weight:normal;font-style:normal;">Replied</div>
<div class="r" style="left:333px;top:920px;width:310px;height:50px;background:#f7f6f2;border:1px solid #fff;box-sizing:border-box"></div>
<div class="r" style="left:646px;top:920px;width:223px;height:50px;background:#f7f6f2;border:1px solid #fff;box-sizing:border-box"></div>
<div class="r" style="left:872px;top:920px;width:475px;height:50px;background:#f7f6f2;border:1px solid #fff;box-sizing:border-box"></div>
<div class="r" style="left:1350px;top:920px;width:155px;height:50px;background:#f7f6f2;border:1px solid #fff;box-sizing:border-box"></div>
<div class="r" style="left:1508px;top:920px;width:155px;height:50px;background:#f7f6f2;border:1px solid #fff;box-sizing:border-box"></div>
<div class="r" style="left:1666px;top:920px;width:155px;height:50px;background:#f7f6f2;border:1px solid #fff;box-sizing:border-box"></div>
<div class="r" style="left:1824px;top:920px;width:78px;height:50px;background:#008000;border:1px solid #e8fbe8;box-sizing:border-box"></div>
<div class="r" style="left:333px;top:973px;width:1330px;height:2px;background:#fff"></div>
<div class="t " style="left:337.5px;top:937.61px;font-size:17px;line-height:17px;color:#1a1ab4;letter-spacing:1.02px;font-family:'Liberation Sans', sans-serif;font-weight:normal;font-style:normal;"><span style="text-decoration:underline">030002200228</span></div>
<div class="t " style="left:651px;top:937.61px;font-size:17px;line-height:17px;color:#1a1ab4;letter-spacing:0.1px;font-family:'Liberation Sans', sans-serif;font-weight:normal;font-style:normal;"><span style="text-decoration:underline">NAJLA SIREGAR</span></div>
<div class="t " style="left:876px;top:937.61px;font-size:17px;line-height:17px;color:#111;letter-spacing:0.54px;font-family:'Liberation Sans', sans-serif;font-weight:normal;font-style:normal;">Permohonan Approval SKPM dan Pembukaan KRS</div>
<div class="t " style="left:1355px;top:937.61px;font-size:17px;line-height:17px;color:#111;letter-spacing:-0.6px;font-family:'Liberation Sans', sans-serif;font-weight:normal;font-style:normal;">KRS</div>
<div class="t " style="left:1513px;top:925.61px;font-size:17px;line-height:17px;color:#111;letter-spacing:1.1px;font-family:'Liberation Sans', sans-serif;font-weight:normal;font-style:normal;">2025-08-06</div>
<div class="t " style="left:1513px;top:949.61px;font-size:17px;line-height:17px;color:#111;letter-spacing:1.35px;font-family:'Liberation Sans', sans-serif;font-weight:normal;font-style:normal;">00:00:00</div>
<div class="t " style="left:1830px;top:937.61px;font-size:17px;line-height:17px;color:#e6ffe6;letter-spacing:0.05px;font-family:'Liberation Sans', sans-serif;font-weight:normal;font-style:normal;">Replied</div>
<div class="r" style="left:333px;top:978px;width:310px;height:50px;background:#e4e4e4;border:1px solid #fff;box-sizing:border-box"></div>
<div class="r" style="left:646px;top:978px;width:223px;height:50px;background:#e4e4e4;border:1px solid #fff;box-sizing:border-box"></div>
<div class="r" style="left:872px;top:978px;width:475px;height:50px;background:#e4e4e4;border:1px solid #fff;box-sizing:border-box"></div>
<div class="r" style="left:1350px;top:978px;width:155px;height:50px;background:#e4e4e4;border:1px solid #fff;box-sizing:border-box"></div>
<div class="r" style="left:1508px;top:978px;width:155px;height:50px;background:#e4e4e4;border:1px solid #fff;box-sizing:border-box"></div>
<div class="r" style="left:1666px;top:978px;width:155px;height:50px;background:#e4e4e4;border:1px solid #fff;box-sizing:border-box"></div>
<div class="r" style="left:1824px;top:978px;width:78px;height:50px;background:#008000;border:1px solid #e8fbe8;box-sizing:border-box"></div>
<div class="r" style="left:333px;top:1031px;width:1330px;height:2px;background:#fff"></div>
<div class="t " style="left:337.5px;top:995.61px;font-size:17px;line-height:17px;color:#1a1ab4;letter-spacing:1.02px;font-family:'Liberation Sans', sans-serif;font-weight:normal;font-style:normal;"><span style="text-decoration:underline">030002200222</span></div>
<div class="t " style="left:651px;top:995.61px;font-size:17px;line-height:17px;color:#1a1ab4;letter-spacing:0.1px;font-family:'Liberation Sans', sans-serif;font-weight:normal;font-style:normal;"><span style="text-decoration:underline">MAULANA HIDAYAT</span></div>
<div class="t " style="left:876px;top:995.61px;font-size:17px;line-height:17px;color:#111;letter-spacing:0.54px;font-family:'Liberation Sans', sans-serif;font-weight:normal;font-style:normal;">Permohonan approval SKPM dan pembukaan KRS</div>
<div class="t " style="left:1355px;top:995.61px;font-size:17px;line-height:17px;color:#111;letter-spacing:-0.6px;font-family:'Liberation Sans', sans-serif;font-weight:normal;font-style:normal;">KRS</div>
<div class="t " style="left:1513px;top:983.61px;font-size:17px;line-height:17px;color:#111;letter-spacing:1.1px;font-family:'Liberation Sans', sans-serif;font-weight:normal;font-style:normal;">2025-08-06</div>
<div class="t " style="left:1513px;top:1007.61px;font-size:17px;line-height:17px;color:#111;letter-spacing:1.35px;font-family:'Liberation Sans', sans-serif;font-weight:normal;font-style:normal;">00:00:00</div>
<div class="t " style="left:1830px;top:995.61px;font-size:17px;line-height:17px;color:#e6ffe6;letter-spacing:0.05px;font-family:'Liberation Sans', sans-serif;font-weight:normal;font-style:normal;">Replied</div>
<div class="r" style="left:0px;top:1107px;width:1920px;height:21px;background:#333333;overflow:hidden"></div>
<div class="r" style="left:0;top:1107px;width:1920px;height:21px;overflow:hidden">
<div class="t " style="left:834px;top:1.91px;font-size:17px;line-height:17px;color:#f4f4f4;letter-spacing:0.79px;font-family:'Liberation Sans', sans-serif;font-weight:normal;font-style:normal;">Copyright©Universitas Trisakti</div>
</div>
<div class="r" style="left:1608px;top:1039px;width:150px;height:69px;background:#f9f9f9;border:1px solid #e6e6e6;border-radius:6px;box-sizing:border-box;box-shadow:0 1px 2px rgba(0,0,0,0.06)"></div>
<div class="t " style="left:1622.5px;top:1054.61px;font-size:17px;line-height:17px;color:#1a1a1a;letter-spacing:-0.56px;font-family:'Liberation Sans', sans-serif;font-weight:normal;font-style:normal;">AXEVAL</div>
<div class="t " style="left:1622.5px;top:1077.61px;font-size:17px;line-height:17px;color:#1a1a1a;letter-spacing:0.31px;font-family:'Liberation Sans', sans-serif;font-weight:normal;font-style:normal;">Internet access</div>
<div class="r" style="left:0px;top:1128px;width:1920px;height:72px;background:linear-gradient(#c2c2c2 0 1px,#f2f2f2 1px 5px,#ececec 5px)"></div>
<svg class="r" style="left:641px;top:1147px;" width="36" height="36" viewBox="0 0 36 36"><defs><linearGradient id="wl" x1="0" y1="0" x2="1" y2="1"><stop offset="0" stop-color="#52c7ff"/><stop offset="1" stop-color="#0a6fd6"/></linearGradient></defs><g fill="url(#wl)"><rect x="0" y="0" width="17" height="17" rx="1.5"/><rect x="19" y="0" width="17" height="17" rx="1.5"/><rect x="0" y="19" width="17" height="17" rx="1.5"/><rect x="19" y="19" width="17" height="17" rx="1.5"/></g></svg>
<div class="r" style="left:698.5px;top:1141px;width:327px;height:46px;background:#fafafa;border:1px solid #dcdcdc;border-radius:23px;box-sizing:border-box;box-shadow:0 1px 0 #d0d0d0"></div>
<svg class="r" style="left:713px;top:1152px;" width="26" height="26" viewBox="0 0 26 26"><circle cx="10.5" cy="10.5" r="7.8" fill="none" stroke="#1a1a1a" stroke-width="2.3"/><path d="M16.3 16.3 L22.5 22.5" stroke="#1a1a1a" stroke-width="2.6" stroke-linecap="round"/></svg>
<div class="t " style="left:753.5px;top:1155.92px;font-size:19px;line-height:19px;color:#5c5c5c;letter-spacing:0px;font-family:'Liberation Sans', sans-serif;font-weight:normal;font-style:normal;">Search</div>
<svg class="r" style="left:946px;top:1145px;" width="78" height="39" viewBox="0 0 78 39"><defs><clipPath id="sc"><path d="M22 0.5 L66 0.5 C73 0.5 77 8 77 19 C77 30 72 38 64 38 L14 38 C6 38 0 33 0 26 C0 20 12 6 22 0.5 Z"/></clipPath><linearGradient id="sky" x1="0" y1="0" x2="0" y2="1"><stop offset="0" stop-color="#2a0c4e"/><stop offset="0.45" stop-color="#4a1a6a"/><stop offset="0.75" stop-color="#c06a98"/><stop offset="1" stop-color="#d88aa0"/></linearGradient><linearGradient id="fade" x1="0" y1="0" x2="1" y2="0"><stop offset="0" stop-color="#fafafa" stop-opacity="1"/><stop offset="0.25" stop-color="#fafafa" stop-opacity="0"/></linearGradient></defs><g clip-path="url(#sc)"><rect width="78" height="39" fill="url(#sky)"/><ellipse cx="44" cy="48" rx="42" ry="21" fill="#2e0c4a"/><g stroke-width="2.6" stroke-linecap="round"><path d="M18 40 L34 28" stroke="#c08030"/><path d="M27 40 L40 27.5" stroke="#e8a838"/><path d="M35 40 L45 27.5" stroke="#f0c050"/><path d="M46 40 L51 27" stroke="#d8c890"/><path d="M55 40 L56.5 27" stroke="#e8f0f0"/><path d="M63 40 L61 27.5" stroke="#c8d0e0"/><path d="M70 39 L66 28.5" stroke="#6870a0"/></g><g fill="#fff4d8"><circle cx="22" cy="14" r="1.1"/><circle cx="29" cy="14" r="1.1"/><circle cx="35" cy="9.5" r="1.2"/><circle cx="35" cy="15.5" r="1"/><circle cx="41" cy="10.5" r="1"/><circle cx="46" cy="7.5" r="0.8"/><circle cx="58" cy="8" r="1.4"/><circle cx="75" cy="12" r="1.2"/></g><path d="M54 13 L73 17 L72 23 L56 20Z" fill="#d8d8f0" opacity="0.9"/><path d="M49 15 L54 11 M71 24 L77 20" stroke="#3050d0" stroke-width="1.5"/><rect width="78" height="39" fill="url(#fade)"/></g></svg>
<svg class="r" style="left:1044px;top:1146px;" width="38" height="36" viewBox="0 0 38 36"><defs><linearGradient id="tv1" x1="0" y1="0" x2="0" y2="1"><stop offset="0" stop-color="#555"/><stop offset="1" stop-color="#111"/></linearGradient><linearGradient id="tv2" x1="0" y1="0" x2="1" y2="1"><stop offset="0" stop-color="#ffffff"/><stop offset="1" stop-color="#d8d8d8"/></linearGradient></defs><rect x="1" y="10" width="27" height="24" rx="2.5" fill="url(#tv1)"/><rect x="10" y="1" width="27" height="23" rx="2" fill="url(#tv2)" opacity="0.92"/><rect x="10" y="10" width="18" height="14" rx="1.5" fill="#b5b5b5" opacity="0.9"/></svg>
<svg class="r" style="left:1110px;top:1146px;" width="38" height="36" viewBox="0 0 38 36"><defs><linearGradient id="cp1" x1="0" y1="0" x2="0" y2="1"><stop offset="0" stop-color="#18a4f4"/><stop offset="0.5" stop-color="#48b068"/><stop offset="1" stop-color="#f2c800"/></linearGradient><linearGradient id="cp2" x1="0.8" y1="0" x2="0.2" y2="1"><stop offset="0" stop-color="#a850e8"/><stop offset="0.5" stop-color="#f05090"/><stop offset="1" stop-color="#f8a850"/></linearGradient></defs><path d="M9 1.3 L22 1.3 C25 1.3 27 2.5 28 4.5 L31 10.4 L18.6 10.4 L14.4 24.2 L4 24.6 C2.5 24.6 1.6 23.5 1.8 22 L4.3 6 C4.8 3 6.5 1.3 9 1.3 Z" fill="url(#cp1)"/><path d="M21 1.3 C24.5 1.3 26.8 2.5 28 4.5 L31 10.4 L18.8 10.4 Z" fill="#1c48d8"/><path d="M10 23.8 L18.8 23.8 L16.8 33 C15.5 34 14 34 13 32.5 C11.5 30 10.5 26.5 10 23.8Z" fill="#f26030"/><path d="M23 10.4 L33.5 10.4 C36 10.4 37.2 12 36.8 14.5 L33.5 29 C33 31.5 31 33 28.5 33 L16.6 33 Z" fill="url(#cp2)"/></svg>
<svg class="r" style="left:1176px;top:1147px;" width="38" height="34" viewBox="0 0 38 34"><path d="M1 3 C1 1.5 2 0.5 3.5 0.5 L13 0.5 L17 4 L34 4 C35.5 4 36.5 5 36.5 6.5 L36.5 12 L1 12Z" fill="#e0a000"/><path d="M1 8 L36.5 8 L36.5 32.5 C36.5 33 36 33.5 35.5 33.5 L2 33.5 C1.5 33.5 1 33 1 32.5Z" fill="#fcd04a"/><path d="M7 33.5 L7 25 C7 23.5 8 22.5 9.5 22.5 L28.5 22.5 C30 22.5 31 23.5 31 25 L31 33.5Z" fill="#1a7fd6"/><path d="M13 27.5 H25" stroke="#0a3f80" stroke-width="1.6"/></svg>
<div class="r" style="left:1191px;top:1188px;width:9px;height:5px;background:#8a8a8a;border-radius:3px"></div>
<div class="r" style="left:1232.5px;top:1136px;width:57px;height:56px;background:#f8f8f8;border:1px solid #e3e3e3;border-radius:6px;box-sizing:border-box"></div>
<svg class="r" style="left:1243px;top:1146px;" width="36" height="36" viewBox="0 0 36 36"><circle cx="18" cy="18" r="18" fill="#34a853"/><path d="M18 0 A18 18 0 0 1 33.6 9 L18 9 A9 9 0 0 0 10.2 13.5 L2.4 9 A18 18 0 0 1 18 0Z" fill="#ea4335"/><path d="M2.4 9 L10.2 13.5 A9 9 0 0 0 10.2 22.5 L2.4 27 A18 18 0 0 1 2.4 9Z" fill="#34a853"/><path d="M33.6 9 A18 18 0 0 1 18 36 L25.8 22.5 A9 9 0 0 0 18 9Z" fill="#fbbc04"/><path d="M10.2 13.5 L2.4 9 A18 18 0 0 0 18 36 L25.8 22.5 A9 9 0 0 1 10.2 22.5Z" fill="#34a853"/><circle cx="18" cy="18" r="8.3" fill="#fff"/><circle cx="18" cy="18" r="6.6" fill="#3b82e8"/></svg>
<div class="r" style="left:1249px;top:1188px;width:24px;height:5px;background:#2e8ba0;border-radius:3px"></div>
<svg class="r" style="left:1577px;top:1157px;" width="20" height="13" viewBox="0 0 20 13"><path d="M2 11 L10 3 L18 11" fill="none" stroke="#1a1a1a" stroke-width="2" stroke-linecap="round" stroke-linejoin="round"/></svg>
<svg class="r" style="left:1622px;top:1153px;" width="26" height="20" viewBox="0 0 26 20"><defs><linearGradient id="cl" x1="0" y1="0.3" x2="1" y2="0.7"><stop offset="0" stop-color="#5a5a5a"/><stop offset="0.42" stop-color="#a8a8a8"/><stop offset="0.5" stop-color="#f4f4f4"/><stop offset="0.62" stop-color="#d0d0d0"/><stop offset="1" stop-color="#e6e6e6"/></linearGradient></defs><path d="M6 18 C3 18 1 16 1 13 C1 10 3 8.5 5.5 8.5 C6.5 4 9.5 1.5 13.5 1.5 C17 1.5 19.5 3.5 20.5 7 C23 7.5 25 9.5 25 12.5 C25 15.5 23 18 20 18Z" fill="url(#cl)" stroke="#2a2a2a" stroke-width="1.6"/></svg>
<div class="r" style="left:1660.5px;top:1136px;width:123px;height:57px;background:#f6f6f6;border-radius:6px;box-shadow:0 1px 1px rgba(0,0,0,0.08)"></div>
<svg class="r" style="left:1670px;top:1153px;" width="27" height="21" viewBox="0 0 27 21"><path d="M2 7.5 A16 16 0 0 1 25 7.5" fill="none" stroke="#1a1a1a" stroke-width="2.2" stroke-linecap="round"/><path d="M6 11.5 A10.5 10.5 0 0 1 21 11.5" fill="none" stroke="#1a1a1a" stroke-width="2.2" stroke-linecap="round"/><path d="M10 15.3 A5 5 0 0 1 17 15.3" fill="none" stroke="#1a1a1a" stroke-width="2.2" stroke-linecap="round"/><circle cx="13.5" cy="18.5" r="2" fill="#1a1a1a"/></svg>
<svg class="r" style="left:1706px;top:1153px;" width="27" height="22" viewBox="0 0 27 22"><path d="M2 8 H6 L11.5 3 V19 L6 14 H2Z" fill="none" stroke="#1a1a1a" stroke-width="1.8" stroke-linejoin="round"/><path d="M15 8 A4 4 0 0 1 15 14" fill="none" stroke="#1a1a1a" stroke-width="1.8" stroke-linecap="round"/><path d="M18.5 5 A8 8 0 0 1 18.5 17" fill="none" stroke="#9a9a9a" stroke-width="1.5" stroke-linecap="round"/><path d="M22 2.5 A12 12 0 0 1 22 19.5" fill="none" stroke="#bdbdbd" stroke-width="1.4" stroke-linecap="round"/></svg>
<svg class="r" style="left:1742px;top:1155px;" width="33" height="18" viewBox="0 0 33 18"><rect x="1.5" y="1.5" width="27" height="14.5" rx="3.5" fill="none" stroke="#1a1a1a" stroke-width="2"/><rect x="5" y="5" width="5" height="7.5" rx="1" fill="#1a1a1a"/><path d="M30.5 6.5 V11" stroke="#1a1a1a" stroke-width="2.2" stroke-linecap="round"/></svg>
<div class="t " style="left:1848px;top:1142.76px;font-size:18px;line-height:18px;color:#1a1a1a;letter-spacing:-0.4px;font-family:'Liberation Sans', sans-serif;font-weight:normal;font-style:normal;">22:20</div>
<div class="t " style="left:1798.3px;top:1166.76px;font-size:18px;line-height:18px;color:#1a1a1a;letter-spacing:0.26px;font-family:'Liberation Sans', sans-serif;font-weight:normal;font-style:normal;">12/04/2026</div>
</body></html>
